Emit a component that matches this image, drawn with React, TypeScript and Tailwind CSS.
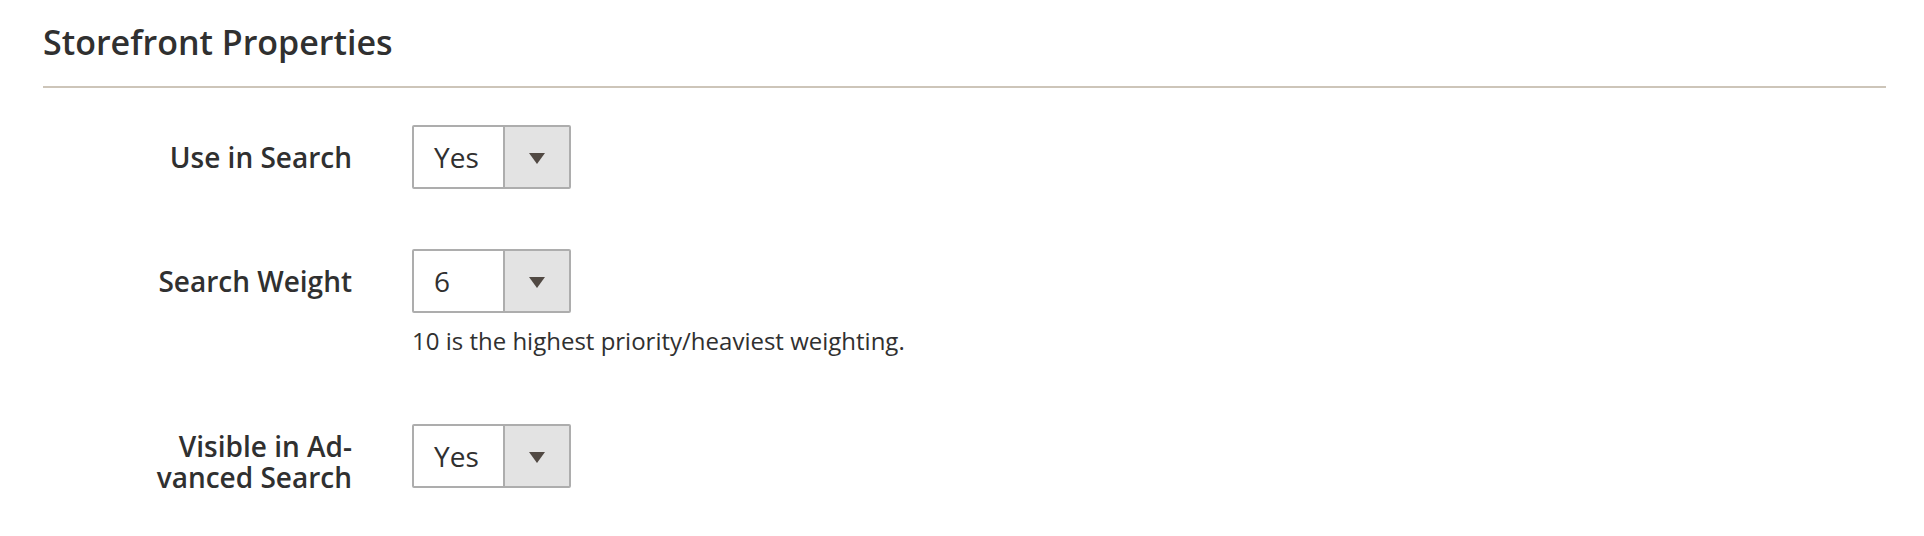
import { ReactNode } from "react";

type SelectProps = {
    value: string;
};

function FakeSelect({ value }: SelectProps) {
    return (
        <div className="flex h-[64px] w-[159px] overflow-hidden rounded-[2px] border-2 border-[#adadad] bg-white">
            <div className="flex w-[89px] items-center pl-[20px] text-[28px] leading-[30px] font-normal">
                {value}
            </div>
            <div className="flex flex-1 items-center justify-center border-l-2 border-[#adadad] bg-[#e3e3e3]">
                <svg width="16" height="11" viewBox="0 0 16 11" className="mt-[2px]">
                    <path d="M0 0 H16 L8 11 Z" fill="#514943" />
                </svg>
            </div>
        </div>
    );
}

type RowProps = {
    label: ReactNode;
    value: string;
    note?: string;
    labelClass?: string;
    className?: string;
};

function FieldRow({ label, value, note, labelClass, className }: RowProps) {
    return (
        <div className={"flex items-start " + (className ?? "")}>
            <div
                className={
                    "w-[309px] text-right text-[28px] font-semibold " +
                    (labelClass ?? "")
                }
            >
                {label}
            </div>
            <div className="ml-[60px] flex flex-col">
                <FakeSelect value={value} />
                {note && (
                    <p className="mt-[12px] text-[24px] leading-[32px] whitespace-nowrap">
                        {note}
                    </p>
                )}
            </div>
        </div>
    );
}

export default function App() {
    return (
        <div className="min-h-[536px] bg-white font-['Open_Sans',sans-serif] text-[#303030]">
            <div className="ml-[43px] w-[1843px]">
                {/* TITLE */}
                <h2 className="border-b-2 border-[#cdc5b9] pt-[22px] pb-[24px] text-[34px] leading-[40px] font-semibold">
                    Storefront Properties
                </h2>

                {/* FIELDS */}
                <FieldRow
                    className="mt-[37px]"
                    label="Use in Search"
                    value="Yes"
                    labelClass="pt-[17px] leading-[30px]"
                />
                <FieldRow
                    className="mt-[60px]"
                    label="Search Weight"
                    value="6"
                    note="10 is the highest priority/heaviest weighting."
                    labelClass="pt-[17px] leading-[30px]"
                />
                <FieldRow
                    className="mt-[67px]"
                    label={
                        <>
                            Visible in Ad-
                            <br />
                            vanced Search
                        </>
                    }
                    value="Yes"
                    labelClass="pt-[7px] leading-[31px]"
                />
            </div>
        </div>
    );
}
